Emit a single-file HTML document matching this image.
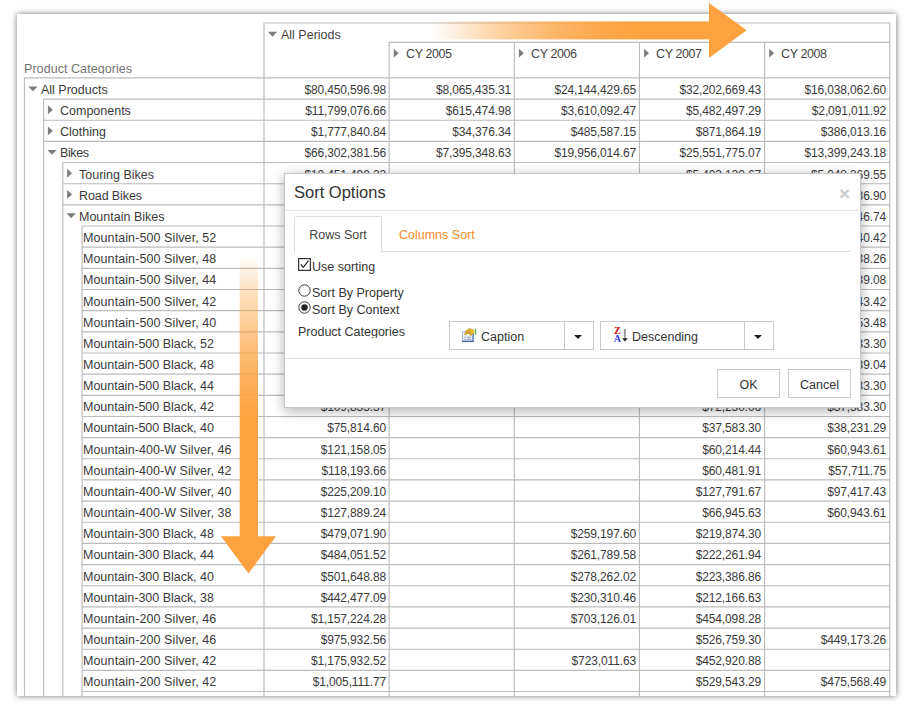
<!DOCTYPE html>
<html lang="en">
<head>
<meta charset="utf-8">
<title>Sort Options</title>
<style>
html,body{margin:0;padding:0;background:#fff;}
body{width:913px;height:709px;position:relative;overflow:hidden;font-family:"Liberation Sans",sans-serif;color:#3c3c3c;}
.shadow{position:absolute;left:17px;top:14px;width:879px;height:682px;background:#fff;box-shadow:0 0 6px rgba(0,0,0,.55);}
.frame{position:absolute;left:17px;top:14px;width:879px;height:682px;overflow:hidden;background:#fff;}
.canvas{position:absolute;left:-17px;top:-14px;width:913px;height:709px;}
.lab{position:absolute;height:17px;line-height:20px;font-size:12.5px;white-space:nowrap;overflow:hidden;color:#3a3a3a;}
.num{position:absolute;height:20px;line-height:20px;font-size:12px;letter-spacing:-.13px;white-space:nowrap;text-align:right;color:#3a3a3a;}
.hdr{position:absolute;font-size:12.5px;line-height:20px;height:20px;white-space:nowrap;color:#444;}

.dlg{position:absolute;left:284px;top:173px;width:577px;height:235px;background:#fff;border:1px solid rgba(0,0,0,.22);box-sizing:border-box;box-shadow:0 3px 12px rgba(0,0,0,.3);font-size:12.5px;color:#333;}
.dlg-head{position:absolute;left:0;top:0;width:575px;height:36px;border-bottom:1px solid #e5e5e5;}
.dlg-title{position:absolute;left:9px;top:7px;font-size:16.5px;line-height:22px;color:#333;white-space:nowrap;}
.dlg-close{position:absolute;left:554px;top:10px;font-size:19px;font-weight:bold;line-height:20px;color:#cbcbcb;}
.dlg-body{position:absolute;left:0;top:0;width:575px;height:184px;}
.dlg-foot{position:absolute;left:0;top:184px;width:575px;height:48px;border-top:1px solid #e5e5e5;}
.tabs{position:absolute;left:9px;top:42px;width:557px;height:36px;}
.tabline{position:absolute;left:0;top:35px;width:557px;height:1px;background:#ddd;}
.tab{position:absolute;top:0;height:35px;line-height:39px;white-space:nowrap;color:#f88a1e;left:105px;}
.tab.active{left:0;width:86px;text-align:center;border:1px solid #ddd;border-bottom:1px solid #fff;border-radius:2px 2px 0 0;color:#444;height:35px;line-height:37px;background:#fff;}
.chk{position:absolute;width:13px;height:13px;}
.chk svg{display:block;}
.t{position:absolute;line-height:20px;height:20px;white-space:nowrap;color:#333;}
.btn{position:absolute;box-sizing:border-box;border:1px solid #c9c9c9;background:#fff;}
.fb{top:10px;width:63px;height:29px;line-height:31px;text-align:center;color:#333;}
.caret{position:absolute;width:0;height:0;border-style:solid;border-width:4px 4px 0 4px;border-color:#222 transparent transparent transparent;}
</style>
</head>
<body>
<div class="shadow"></div>
<div class="frame"><div class="canvas">
<div class="hdr" style="left:24px;top:59px;height:15px;overflow:hidden;color:#737373;letter-spacing:.06px;">Product Categories</div>
<div class="hdr" style="left:281px;top:25px;">All Periods</div>
<div class="hdr" style="left:406px;top:44px;letter-spacing:-.4px;">CY 2005</div>
<div class="hdr" style="left:531px;top:44px;letter-spacing:-.4px;">CY 2006</div>
<div class="hdr" style="left:656px;top:44px;letter-spacing:-.4px;">CY 2007</div>
<div class="hdr" style="left:781px;top:44px;letter-spacing:-.4px;">CY 2008</div>
<div class="lab" style="left:41px;top:80px;width:221px;">All Products</div><div class="num" style="left:265px;top:80px;width:121px;">$80,450,596.98</div><div class="num" style="left:390px;top:80px;width:121px;">$8,065,435.31</div><div class="num" style="left:515px;top:80px;width:121px;">$24,144,429.65</div><div class="num" style="left:640px;top:80px;width:121px;">$32,202,669.43</div><div class="num" style="left:765px;top:80px;width:121px;">$16,038,062.60</div>
<div class="lab" style="left:60px;top:101px;width:202px;">Components</div><div class="num" style="left:265px;top:101px;width:121px;">$11,799,076.66</div><div class="num" style="left:390px;top:101px;width:121px;">$615,474.98</div><div class="num" style="left:515px;top:101px;width:121px;">$3,610,092.47</div><div class="num" style="left:640px;top:101px;width:121px;">$5,482,497.29</div><div class="num" style="left:765px;top:101px;width:121px;">$2,091,011.92</div>
<div class="lab" style="left:60px;top:122px;width:202px;">Clothing</div><div class="num" style="left:265px;top:122px;width:121px;">$1,777,840.84</div><div class="num" style="left:390px;top:122px;width:121px;">$34,376.34</div><div class="num" style="left:515px;top:122px;width:121px;">$485,587.15</div><div class="num" style="left:640px;top:122px;width:121px;">$871,864.19</div><div class="num" style="left:765px;top:122px;width:121px;">$386,013.16</div>
<div class="lab" style="left:60px;top:143px;width:202px;letter-spacing:-.4px;">Bikes</div><div class="num" style="left:265px;top:143px;width:121px;">$66,302,381.56</div><div class="num" style="left:390px;top:143px;width:121px;">$7,395,348.63</div><div class="num" style="left:515px;top:143px;width:121px;">$19,956,014.67</div><div class="num" style="left:640px;top:143px;width:121px;">$25,551,775.07</div><div class="num" style="left:765px;top:143px;width:121px;">$13,399,243.18</div>
<div class="lab" style="left:79px;top:165px;width:183px;">Touring Bikes</div><div class="num" style="left:265px;top:165px;width:121px;">$10,451,490.22</div><div class="num" style="left:640px;top:165px;width:121px;">$5,403,120.67</div><div class="num" style="left:765px;top:165px;width:121px;">$5,048,369.55</div>
<div class="lab" style="left:79px;top:186px;width:183px;letter-spacing:-.1px;">Road Bikes</div><div class="num" style="left:265px;top:186px;width:121px;">$29,358,206.96</div><div class="num" style="left:390px;top:186px;width:121px;">$4,545,336.51</div><div class="num" style="left:515px;top:186px;width:121px;">$13,035,794.46</div><div class="num" style="left:640px;top:186px;width:121px;">$7,931,179.09</div><div class="num" style="left:765px;top:186px;width:121px;">$3,845,836.90</div>
<div class="lab" style="left:79px;top:207px;width:183px;">Mountain Bikes</div><div class="num" style="left:265px;top:207px;width:121px;">$26,492,684.38</div><div class="num" style="left:390px;top:207px;width:121px;">$2,850,012.12</div><div class="num" style="left:515px;top:207px;width:121px;">$6,920,220.21</div><div class="num" style="left:640px;top:207px;width:121px;">$12,217,475.31</div><div class="num" style="left:765px;top:207px;width:121px;">$4,504,946.74</div>
<div class="lab" style="left:83px;top:228px;width:179px;letter-spacing:.09px;">Mountain-500 Silver, 52</div><div class="num" style="left:265px;top:228px;width:121px;">$81,358.56</div><div class="num" style="left:640px;top:228px;width:121px;">$40,678.14</div><div class="num" style="left:765px;top:228px;width:121px;">$40,640.42</div>
<div class="lab" style="left:83px;top:249px;width:179px;letter-spacing:.09px;">Mountain-500 Silver, 48</div><div class="num" style="left:265px;top:249px;width:121px;">$98,307.13</div><div class="num" style="left:640px;top:249px;width:121px;">$50,168.87</div><div class="num" style="left:765px;top:249px;width:121px;">$48,138.26</div>
<div class="lab" style="left:83px;top:270px;width:179px;letter-spacing:.09px;">Mountain-500 Silver, 44</div><div class="num" style="left:265px;top:270px;width:121px;">$108,139.97</div><div class="num" style="left:640px;top:270px;width:121px;">$57,800.89</div><div class="num" style="left:765px;top:270px;width:121px;">$50,339.08</div>
<div class="lab" style="left:83px;top:292px;width:179px;letter-spacing:.09px;">Mountain-500 Silver, 42</div><div class="num" style="left:265px;top:292px;width:121px;">$103,393.26</div><div class="num" style="left:640px;top:292px;width:121px;">$51,599.84</div><div class="num" style="left:765px;top:292px;width:121px;">$51,743.42</div>
<div class="lab" style="left:83px;top:313px;width:179px;letter-spacing:.09px;">Mountain-500 Silver, 40</div><div class="num" style="left:265px;top:313px;width:121px;">$98,646.55</div><div class="num" style="left:640px;top:313px;width:121px;">$50,423.07</div><div class="num" style="left:765px;top:313px;width:121px;">$48,253.48</div>
<div class="lab" style="left:83px;top:334px;width:179px;letter-spacing:-.02px;">Mountain-500 Black, 52</div><div class="num" style="left:265px;top:334px;width:121px;">$89,747.59</div><div class="num" style="left:640px;top:334px;width:121px;">$50,564.29</div><div class="num" style="left:765px;top:334px;width:121px;">$39,133.30</div>
<div class="lab" style="left:83px;top:355px;width:179px;letter-spacing:-.02px;">Mountain-500 Black, 48</div><div class="num" style="left:265px;top:355px;width:121px;">$118,551.79</div><div class="num" style="left:640px;top:355px;width:121px;">$58,862.75</div><div class="num" style="left:765px;top:355px;width:121px;">$59,639.04</div>
<div class="lab" style="left:83px;top:376px;width:179px;letter-spacing:-.02px;">Mountain-500 Black, 44</div><div class="num" style="left:265px;top:376px;width:121px;">$117,471.53</div><div class="num" style="left:640px;top:376px;width:121px;">$57,988.23</div><div class="num" style="left:765px;top:376px;width:121px;">$59,433.30</div>
<div class="lab" style="left:83px;top:397px;width:179px;letter-spacing:-.02px;">Mountain-500 Black, 42</div><div class="num" style="left:265px;top:397px;width:121px;">$109,835.57</div><div class="num" style="left:640px;top:397px;width:121px;">$72,250.06</div><div class="num" style="left:765px;top:397px;width:121px;">$37,583.30</div>
<div class="lab" style="left:83px;top:418px;width:179px;letter-spacing:-.02px;">Mountain-500 Black, 40</div><div class="num" style="left:265px;top:418px;width:121px;">$75,814.60</div><div class="num" style="left:640px;top:418px;width:121px;">$37,583.30</div><div class="num" style="left:765px;top:418px;width:121px;">$38,231.29</div>
<div class="lab" style="left:83px;top:440px;width:179px;letter-spacing:.05px;">Mountain-400-W Silver, 46</div><div class="num" style="left:265px;top:440px;width:121px;">$121,158.05</div><div class="num" style="left:640px;top:440px;width:121px;">$60,214.44</div><div class="num" style="left:765px;top:440px;width:121px;">$60,943.61</div>
<div class="lab" style="left:83px;top:461px;width:179px;letter-spacing:.05px;">Mountain-400-W Silver, 42</div><div class="num" style="left:265px;top:461px;width:121px;">$118,193.66</div><div class="num" style="left:640px;top:461px;width:121px;">$60,481.91</div><div class="num" style="left:765px;top:461px;width:121px;">$57,711.75</div>
<div class="lab" style="left:83px;top:482px;width:179px;letter-spacing:.05px;">Mountain-400-W Silver, 40</div><div class="num" style="left:265px;top:482px;width:121px;">$225,209.10</div><div class="num" style="left:640px;top:482px;width:121px;">$127,791.67</div><div class="num" style="left:765px;top:482px;width:121px;">$97,417.43</div>
<div class="lab" style="left:83px;top:503px;width:179px;letter-spacing:.05px;">Mountain-400-W Silver, 38</div><div class="num" style="left:265px;top:503px;width:121px;">$127,889.24</div><div class="num" style="left:640px;top:503px;width:121px;">$66,945.63</div><div class="num" style="left:765px;top:503px;width:121px;">$60,943.61</div>
<div class="lab" style="left:83px;top:524px;width:179px;letter-spacing:-.02px;">Mountain-300 Black, 48</div><div class="num" style="left:265px;top:524px;width:121px;">$479,071.90</div><div class="num" style="left:515px;top:524px;width:121px;">$259,197.60</div><div class="num" style="left:640px;top:524px;width:121px;">$219,874.30</div>
<div class="lab" style="left:83px;top:545px;width:179px;letter-spacing:-.02px;">Mountain-300 Black, 44</div><div class="num" style="left:265px;top:545px;width:121px;">$484,051.52</div><div class="num" style="left:515px;top:545px;width:121px;">$261,789.58</div><div class="num" style="left:640px;top:545px;width:121px;">$222,261.94</div>
<div class="lab" style="left:83px;top:567px;width:179px;letter-spacing:-.02px;">Mountain-300 Black, 40</div><div class="num" style="left:265px;top:567px;width:121px;">$501,648.88</div><div class="num" style="left:515px;top:567px;width:121px;">$278,262.02</div><div class="num" style="left:640px;top:567px;width:121px;">$223,386.86</div>
<div class="lab" style="left:83px;top:588px;width:179px;letter-spacing:-.02px;">Mountain-300 Black, 38</div><div class="num" style="left:265px;top:588px;width:121px;">$442,477.09</div><div class="num" style="left:515px;top:588px;width:121px;">$230,310.46</div><div class="num" style="left:640px;top:588px;width:121px;">$212,166.63</div>
<div class="lab" style="left:83px;top:609px;width:179px;letter-spacing:.09px;">Mountain-200 Silver, 46</div><div class="num" style="left:265px;top:609px;width:121px;">$1,157,224.28</div><div class="num" style="left:515px;top:609px;width:121px;">$703,126.01</div><div class="num" style="left:640px;top:609px;width:121px;">$454,098.28</div>
<div class="lab" style="left:83px;top:630px;width:179px;letter-spacing:.09px;">Mountain-200 Silver, 46</div><div class="num" style="left:265px;top:630px;width:121px;">$975,932.56</div><div class="num" style="left:640px;top:630px;width:121px;">$526,759.30</div><div class="num" style="left:765px;top:630px;width:121px;">$449,173.26</div>
<div class="lab" style="left:83px;top:651px;width:179px;letter-spacing:.09px;">Mountain-200 Silver, 42</div><div class="num" style="left:265px;top:651px;width:121px;">$1,175,932.52</div><div class="num" style="left:515px;top:651px;width:121px;">$723,011.63</div><div class="num" style="left:640px;top:651px;width:121px;">$452,920.88</div>
<div class="lab" style="left:83px;top:672px;width:179px;letter-spacing:.09px;">Mountain-200 Silver, 42</div><div class="num" style="left:265px;top:672px;width:121px;">$1,005,111.77</div><div class="num" style="left:640px;top:672px;width:121px;">$529,543.29</div><div class="num" style="left:765px;top:672px;width:121px;">$475,568.49</div>
<div class="lab" style="left:83px;top:694px;width:179px;letter-spacing:.09px;">Mountain-200 Silver, 38</div>
<svg width="913" height="709" viewBox="0 0 913 709" style="position:absolute;left:0;top:0;"><path d="M263.50 23.00H890.20M388.65 42.30H890.20M264.00 22.50V700.00M389.15 41.80V700.00M514.35 41.80V700.00M639.45 41.80V700.00M764.60 41.80V700.00M889.70 22.50V700.00M24.50 77.40V700.00M43.60 98.56V700.00M62.80 162.04V700.00M82.10 225.52V700.00M24.00 77.90H890.20M43.10 99.06H890.20M43.10 120.22H890.20M43.10 141.38H890.20M62.30 162.54H890.20M62.30 183.70H890.20M62.30 204.86H890.20M81.60 226.02H890.20M81.60 247.18H890.20M81.60 268.34H890.20M81.60 289.50H890.20M81.60 310.66H890.20M81.60 331.82H890.20M81.60 352.98H890.20M81.60 374.14H890.20M81.60 395.30H890.20M81.60 416.46H890.20M81.60 437.62H890.20M81.60 458.78H890.20M81.60 479.94H890.20M81.60 501.10H890.20M81.60 522.26H890.20M81.60 543.42H890.20M81.60 564.58H890.20M81.60 585.74H890.20M81.60 606.90H890.20M81.60 628.06H890.20M81.60 649.22H890.20M81.60 670.38H890.20M81.60 691.54H890.20" fill="none" stroke="#bcbcbc" stroke-width="1.15"/></svg>
<svg width="913" height="709" viewBox="0 0 913 709" style="position:absolute;left:0;top:0;" fill="#7d7d7d"><polygon points="267.90,31.80 277.10,31.80 272.50,36.70"/><polygon points="393.75,48.80 398.75,53.20 393.75,57.60"/><polygon points="518.95,48.80 523.95,53.20 518.95,57.60"/><polygon points="644.05,48.80 649.05,53.20 644.05,57.60"/><polygon points="769.20,48.80 774.20,53.20 769.20,57.60"/><polygon points="28.30,86.40 37.50,86.40 32.90,91.30"/><polygon points="47.90,105.36 52.90,109.76 47.90,114.16"/><polygon points="47.90,126.52 52.90,130.92 47.90,135.32"/><polygon points="47.40,149.88 56.60,149.88 52.00,154.78"/><polygon points="67.10,168.84 72.10,173.24 67.10,177.64"/><polygon points="67.10,190.00 72.10,194.40 67.10,198.80"/><polygon points="66.60,213.36 75.80,213.36 71.20,218.26"/></svg>

<div class="dlg">
  <div class="dlg-head"><span class="dlg-title">Sort Options</span><span class="dlg-close">&times;</span></div>
  <div class="dlg-body">
    <div class="tabs"><div class="tabline"></div><div class="tab active">Rows Sort</div><div class="tab">Columns Sort</div></div>
    <div class="chk" style="left:13px;top:84px;"><svg width="13" height="13" viewBox="0 0 13 13"><rect x="0.6" y="0.6" width="11.8" height="11.8" fill="#fff" stroke="#333" stroke-width="1.2"/><path d="M2.8 6.4 L5.3 9.3 L10.4 2.6" fill="none" stroke="#222" stroke-width="1.2"/></svg></div>
    <div class="t" style="left:27px;top:83px;">Use sorting</div>
    <div class="chk" style="left:13px;top:110px;"><svg width="13" height="13" viewBox="0 0 13 13"><circle cx="6.5" cy="6.5" r="5.7" fill="#fff" stroke="#3a3a3a" stroke-width="1"/></svg></div>
    <div class="t" style="left:27px;top:109px;">Sort By Property</div>
    <div class="chk" style="left:13px;top:127px;"><svg width="13" height="13" viewBox="0 0 13 13"><circle cx="6.5" cy="6.5" r="5.7" fill="#fff" stroke="#3a3a3a" stroke-width="1"/><circle cx="6.5" cy="6.5" r="3.2" fill="#222"/></svg></div>
    <div class="t" style="left:27px;top:126px;">Sort By Context</div>
    <div class="t" style="left:13px;top:148px;height:15.5px;overflow:hidden;">Product Categories</div>
    <div class="btn" style="left:164px;top:147px;width:116px;height:29px;"></div>
    <div class="btn" style="left:279px;top:147px;width:30px;height:29px;"></div>
    <svg style="position:absolute;left:176px;top:153px;" width="17" height="16" viewBox="0 0 17 16"><rect x="1.5" y="4.6" width="10.6" height="10" fill="#f1f5fc" stroke="#a9bbe0" stroke-width="1"/><rect x="1" y="13.7" width="11.6" height="1.3" fill="#3f5f9f"/><rect x="11.5" y="6.4" width="1.1" height="8.6" fill="#4f6eb0"/><rect x="3.2" y="9.7" width="1.6" height="1" fill="#8c98b8"/><rect x="5.6" y="9.7" width="4.6" height="1" fill="#8c98b8"/><rect x="3.2" y="11.8" width="1.6" height="1" fill="#8c98b8"/><rect x="5.6" y="11.8" width="4.6" height="1" fill="#8c98b8"/><path d="M3.4 7.6 L5.2 3.4 L8.6 1.4 L13.3 3.2 L12.8 6.2 L9.8 8.8 L8.4 7.2 L6.4 6.4 L4.6 8 Z" fill="#d9ae36" stroke="#b48d1e" stroke-width="0.5"/><path d="M9.8 2.4 L13.2 3.6 L12.5 6 L10.6 5.2 Z" fill="#f9c620"/><path d="M5.6 4.6 L7.4 6.6 M7 3.4 L9 5.8" stroke="#a8841c" stroke-width="0.5" fill="none"/><rect x="14.1" y="1.6" width="1.1" height="6.4" fill="#3fae3f"/></svg>
    <div class="t" style="left:196px;top:153px;">Caption</div>
    <div class="caret" style="left:289px;top:161px;"></div>
    <div class="btn" style="left:315px;top:147px;width:145px;height:29px;"></div>
    <div class="btn" style="left:459px;top:147px;width:30px;height:29px;"></div>
    <svg style="position:absolute;left:327px;top:152px;" width="18" height="18" viewBox="0 0 18 18"><text x="1.9" y="8.4" font-family="Liberation Serif, serif" font-weight="bold" font-size="10" fill="#c80f0f">Z</text><text x="1.7" y="16.2" font-family="Liberation Serif, serif" font-weight="bold" font-size="10" fill="#1f3be0">A</text><rect x="12.3" y="2.8" width="1.3" height="10" fill="#777"/><polygon points="10.1,12.3 15.9,12.3 13,15.5" fill="#222"/></svg>
    <div class="t" style="left:347px;top:153px;">Descending</div>
    <div class="caret" style="left:469px;top:161px;"></div>
  </div>
  <div class="dlg-foot"><div class="btn fb" style="left:432px;">OK</div><div class="btn fb" style="left:503px;">Cancel</div></div>
</div>
</div></div>

<svg class="arrows" width="913" height="709" viewBox="0 0 913 709" style="position:absolute;left:0;top:0;pointer-events:none;">
<defs>
<linearGradient id="gh" x1="0" y1="0" x2="1" y2="0"><stop offset="0" stop-color="#fda23e" stop-opacity="0"/><stop offset="0.107" stop-color="#fda23e" stop-opacity="0.2"/><stop offset="0.214" stop-color="#fda23e" stop-opacity="0.42"/><stop offset="0.32" stop-color="#fda23e" stop-opacity="0.6"/><stop offset="0.464" stop-color="#fda23e" stop-opacity="0.8"/><stop offset="0.607" stop-color="#fda23e" stop-opacity="0.93"/><stop offset="0.75" stop-color="#fda23e" stop-opacity="1"/><stop offset="1" stop-color="#fda23e" stop-opacity="1"/></linearGradient>
<linearGradient id="gv" x1="0" y1="0" x2="0" y2="1"><stop offset="0" stop-color="#fda23e" stop-opacity="0"/><stop offset="0.1" stop-color="#fda23e" stop-opacity="0.25"/><stop offset="0.2" stop-color="#fda23e" stop-opacity="0.45"/><stop offset="0.32" stop-color="#fda23e" stop-opacity="0.68"/><stop offset="0.45" stop-color="#fda23e" stop-opacity="0.87"/><stop offset="0.58" stop-color="#fda23e" stop-opacity="1"/><stop offset="1" stop-color="#fda23e" stop-opacity="1"/></linearGradient>
</defs>
<rect x="430" y="21.4" width="280" height="18" fill="url(#gh)"/>
<polygon points="709,3 746.6,30.3 709,58" fill="#fda23e"/>
<rect x="239.7" y="255" width="18.3" height="282" fill="url(#gv)"/>
<polygon points="221,536.2 276,536.2 248.5,573.4" fill="#fda23e"/>
</svg>
</body>
</html>
